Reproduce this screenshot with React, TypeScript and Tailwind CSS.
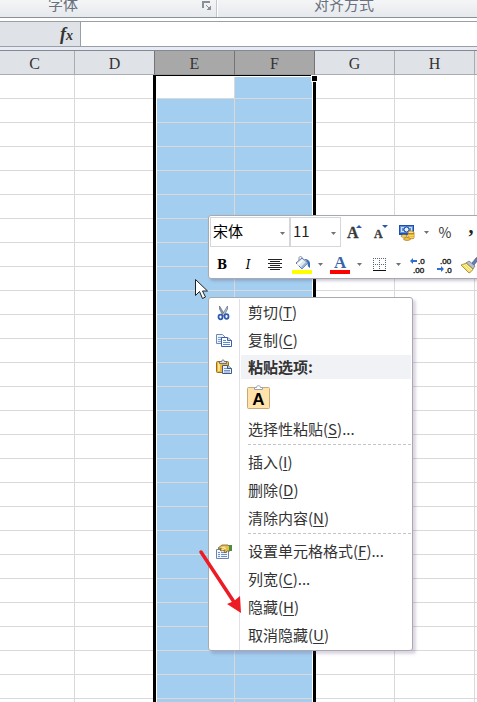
import React from 'react';

const columns = ['C', 'D', 'E', 'F', 'G', 'H', ''];
const rows = Array.from({ length: 27 }, (_, i) => i);
const isSelected = (name: string) => name === 'E' || name === 'F';

function Caret() {
  return (
    <svg width="5" height="3" viewBox="0 0 5 3" aria-hidden="true">
      <path d="M0 0h5L2.5 3z" fill="#6f7378" />
    </svg>
  );
}

function CaretButton({ label }: { label: string }) {
  return (
    <button type="button" aria-label={label} className="flex w-[11px] shrink-0 items-center justify-center">
      <Caret />
    </button>
  );
}

function Tool({ label, width, children }: { label: string; width: string; children: React.ReactNode }) {
  return (
    <button type="button" aria-label={label} className={`flex shrink-0 items-center justify-center ${width}`}>
      {children}
    </button>
  );
}

function GrowFontIcon() {
  return (
    <svg width="16" height="18" viewBox="0 0 16 18">
      <text x="1" y="15" fontSize="16" fontWeight="700" fill="#3b3b3b" stroke="#3b3b3b" strokeWidth=".3" fontFamily="Liberation Serif, serif">A</text>
      <path d="M10 5l3-3 3 3z" fill="#2f57a5" />
    </svg>
  );
}

function ShrinkFontIcon() {
  return (
    <svg width="16" height="18" viewBox="0 0 16 18">
      <text x="2" y="15" fontSize="12" fontWeight="700" fill="#3b3b3b" stroke="#3b3b3b" strokeWidth=".3" fontFamily="Liberation Serif, serif">A</text>
      <path d="M10 2h6l-3 3z" fill="#2f57a5" />
    </svg>
  );
}

function CurrencyIcon() {
  return (
    <svg width="18" height="17" viewBox="0 0 18 17">
      <rect x="1" y="1" width="15" height="10" fill="#1f4fae" />
      <rect x="2" y="2" width="13" height="7" fill="#5b8fe0" />
      <path d="M3 3h3v1H4v3h2v1H3zM14 3h-3v1h2v3h-2v1h3z" fill="#cfe0fa" />
      <circle cx="8.500" cy="5.500" r="2.500" fill="#e6effc" stroke="#1d479b" />
      <ellipse cx="13" cy="8.500" rx="3" ry="1.500" fill="#ffe27a" stroke="#b07a12" strokeWidth=".7" />
      <path d="M10 9v5c0 1 6 1 6 0V9c-1 1-5 1-6 0" fill="#edb52e" stroke="#a46d10" strokeWidth=".7" />
      <path d="M10 11c1 1 5 1 6 0M10 13c1 1 5 1 6 0" stroke="#fff0a8" fill="none" strokeWidth=".7" />
      <ellipse cx="6" cy="12" rx="3" ry="1.300" fill="#ffe27a" stroke="#a46d10" strokeWidth=".7" />
      <ellipse cx="9" cy="15" rx="3.500" ry="1.400" fill="#f8c93f" stroke="#a46d10" strokeWidth=".7" />
    </svg>
  );
}

function CenterIcon() {
  return (
    <svg width="14" height="11" viewBox="0 0 14 11" shapeRendering="crispEdges">
      <path d="M0 .5h14M2 2.500h10M0 4.500h14M2 6.500h10M0 8.500h14M2 10.500h10" stroke="#222" />
    </svg>
  );
}

function FillIcon() {
  return (
    <svg width="20" height="18" viewBox="0 0 20 18">
      <path d="M7 6V2c0-2 3-2 3 0v4" fill="none" stroke="#7d8da3" />
      <path d="M4 7l6-5 6 5-6 6z" fill="#dce8f4" stroke="#637998" />
      <path d="M5 8l5-4 1 1-5 5z" fill="#fff" />
      <path d="M9 11l5-5 2 1-6 6z" fill="#9bb3d0" />
      <path d="M12 3c4 0 6 2 6 5v4c-2-1-3-3-2-5-1-2-2-3-4-4z" fill="#3a69b5" />
      <rect x="0" y="14" width="20" height="4" fill="#ff0" />
    </svg>
  );
}

function FontColorIcon() {
  return (
    <svg width="20" height="18" viewBox="0 0 20 18" className="overflow-visible">
      <text x="4" y="12" fontSize="17" fontWeight="700" fill="#3763aa" fontFamily="Liberation Serif, serif">A</text>
      <rect x="0" y="14" width="20" height="4" fill="#f00" />
    </svg>
  );
}

function BordersIcon() {
  return (
    <svg width="13" height="13" viewBox="0 0 13 13" shapeRendering="crispEdges">
      <path d="M0 .5h13M0 6.500h13M.5 0v12M6.500 0v12M12.500 0v12" stroke="#55657f" strokeDasharray="1 1" fill="none" />
      <path d="M0 12.500h13" stroke="#111" />
    </svg>
  );
}

function DecimalIcon({ increase }: { increase: boolean }) {
  return (
    <svg width="17" height="16" viewBox="0 0 17 16" fontFamily="Liberation Sans, sans-serif" fontSize="8" fill="#222" className="overflow-visible">
      <text x={increase ? 9 : 4} y="7" stroke="#222" strokeWidth=".4">{increase ? '.0' : '.00'}</text>
      <text x={increase ? 4 : 9} y="16" stroke="#222" strokeWidth=".4">{increase ? '.00' : '.0'}</text>
      {increase
        ? <path d="M1 4l3-3v2h4v2H4v2z" fill="#2f6fcf" />
        : <path d="M8 12l-3-3v2H1v2h4v2z" fill="#2f6fcf" />}
    </svg>
  );
}

function BrushIcon() {
  return (
    <svg width="18" height="18" viewBox="0 0 18 18">
      <path d="M11 7l4-5c1-1 3 0 2 2l-4 5z" fill="#6283b5" stroke="#3c547c" strokeWidth=".7" />
      <path d="M8 5l6 5-2 3-7-6z" fill="#b7c0ce" stroke="#5c6779" strokeWidth=".7" />
      <path d="M5 7c-1 1-3 1-5 2l8 8c2-1 3-2 4-4z" fill="#f6de6c" stroke="#9b8220" strokeWidth=".8" />
      <path d="M3 9l6 6M5 8l6 6" stroke="#fff7b8" />
    </svg>
  );
}

function MiniToolbar() {
  return (
    <div
      role="toolbar"
      aria-label="浮动工具栏"
      className="absolute left-[208px] top-[215px] z-10 w-[284px] rounded-[3px] border border-[#a7abb0] bg-white shadow-[2px_2px_3px_rgba(90,80,120,0.3)]"
    >
      <div className="flex h-[31px] pl-px pt-px">
        <label className="relative flex h-[30px] w-[80px] shrink-0 items-center border border-[#d3d6db]">
          <select aria-label="字体" className="h-7 w-full appearance-none bg-transparent pb-0.5 pl-0.5 text-[15px] text-black outline-none">
            <option>宋体</option>
          </select>
          <span className="pointer-events-none absolute right-1 top-[14px]"><Caret /></span>
        </label>
        <label className="relative flex h-[30px] w-[51px] shrink-0 items-center border border-[#d3d6db]">
          <select aria-label="字号" className="h-7 w-full appearance-none bg-transparent pb-0.5 pl-0.5 text-[15px] text-[#222] outline-none">
            <option>11</option>
          </select>
          <span className="pointer-events-none absolute right-1 top-[14px]"><Caret /></span>
        </label>
        <Tool label="增大字体" width="w-[26px]"><GrowFontIcon /></Tool>
        <Tool label="缩小字体" width="w-[26px]"><ShrinkFontIcon /></Tool>
        <Tool label="会计数字格式" width="w-7"><CurrencyIcon /></Tool>
        <CaretButton label="更多会计格式" />
        <Tool label="百分比样式" width="w-[26px]">
          <span className="text-sm text-[#333]">%</span>
        </Tool>
        <Tool label="千位分隔样式" width="w-[26px]">
          <span className="pb-3 font-['Liberation_Serif',serif] text-xl leading-5 font-bold text-[#222]">,</span>
        </Tool>
      </div>
      <div className="flex h-[31px] pt-1">
        <Tool label="加粗" width="w-[26px]">
          <span className="font-['DejaVu_Serif',serif] text-xs font-bold text-black">B</span>
        </Tool>
        <Tool label="倾斜" width="w-[26px]">
          <span className="font-['DejaVu_Serif',serif] text-xs text-black italic">I</span>
        </Tool>
        <Tool label="居中" width="w-[27px]"><CenterIcon /></Tool>
        <Tool label="填充颜色" width="w-[27px]"><FillIcon /></Tool>
        <CaretButton label="更多填充颜色" />
        <Tool label="字体颜色" width="w-7"><FontColorIcon /></Tool>
        <CaretButton label="更多字体颜色" />
        <Tool label="边框" width="w-7"><BordersIcon /></Tool>
        <CaretButton label="更多边框" />
        <Tool label="增加小数位数" width="w-[27px]"><DecimalIcon increase /></Tool>
        <Tool label="减少小数位数" width="w-[26px]"><DecimalIcon increase={false} /></Tool>
        <Tool label="格式刷" width="w-[26px]"><BrushIcon /></Tool>
      </div>
    </div>
  );
}

function CutIcon() {
  return (
    <svg width="16" height="16" viewBox="0 0 16 16">
      <path d="M3.500 1l5.500 9-2 1L3.500 4z" fill="#8b99ad" stroke="#4d5d78" strokeWidth=".6" />
      <path d="M11.500 1L6 10l2 1 3.500-7z" fill="#bcc7d5" stroke="#4d5d78" strokeWidth=".6" />
      <ellipse cx="4.500" cy="12" rx="2" ry="2.300" fill="none" stroke="#2f5cb0" strokeWidth="1.800" />
      <ellipse cx="10.500" cy="11.500" rx="2" ry="2.300" fill="none" stroke="#2f5cb0" strokeWidth="1.800" />
    </svg>
  );
}

function CopyIcon() {
  return (
    <svg width="16" height="16" viewBox="0 0 16 16">
      <path d="M.5 1.500h6l3 3v6h-9z" fill="#eef4fc" stroke="#7188b4" />
      <path d="M2 4.500h4M2 6.500h4M2 8.500h3" stroke="#7aa0dc" />
      <path d="M5.500 4.500h6l4 3v6h-10z" fill="#fff" stroke="#3d5fa5" />
      <path d="M11.500 4.500v3h4" fill="#c9dcf5" stroke="#3d5fa5" />
      <path d="M7 7.500h3M7 9.500h7M7 11.500h7" stroke="#5b8ad4" />
    </svg>
  );
}

function PasteIcon() {
  return (
    <svg width="16" height="16" viewBox="0 0 16 16">
      <rect x=".5" y="2.500" width="12" height="11" rx="1" fill="#edb83d" stroke="#96701e" />
      <path d="M2 4h2v8H2z" fill="#ffe295" />
      <path d="M3.500 4.500v-2h2c0-2 3-2 3 0h2v2z" fill="#d9dce1" stroke="#5e5e5e" strokeWidth=".8" />
      <path d="M6.500 6.500h5l4 3v5h-9z" fill="#e8f1fc" stroke="#465b84" />
      <path d="M8 9.500h4M8 11.500h6M8 13h6" stroke="#7a97c4" />
      <path d="M11.500 6.500v3h4" fill="#b6cbe8" stroke="#465b84" />
    </svg>
  );
}

function FormatIcon() {
  return (
    <svg width="16" height="16" viewBox="0 0 16 16">
      <path d="M.5 5.500h12v9H.5z" fill="#f3f7fd" stroke="#6e84ad" />
      <path d="M2 8.500h2M5 8.500h6M2 10.500h2M5 10.500h6M2 12.500h2M5 12.500h6" stroke="#6a8fcb" />
      <path d="M2 4l4-3 6 0 2 2v4h-3L9 9 8 8l1-2-4 1-1-1 2-2-3 1z" fill="#e7bd52" stroke="#755d20" strokeWidth=".8" />
      <path d="M5 4l4-1M6 6l4-2" stroke="#fff0af" />
      <path d="M13 1h3v6h-3z" fill="#4e8d3c" />
    </svg>
  );
}

function PasteValueIcon() {
  return (
    <svg width="24" height="25" viewBox="0 0 24 25">
      <rect x=".5" y="2.500" width="22" height="21" rx="1" fill="#ffe3ab" stroke="#c8a878" />
      <path d="M7.500 4.500v-2h2c0-2.500 4-2.500 4 0h2v2z" fill="#fff" stroke="#9ba0a6" />
      <text x="11.500" y="20" textAnchor="middle" fontSize="17" fontWeight="700" fontFamily="Liberation Sans, sans-serif" fill="#000">A</text>
    </svg>
  );
}

function Gutter({ children }: { children?: React.ReactNode }) {
  return (
    <span className="flex w-[31px] shrink-0 items-center justify-center self-stretch border-r border-[#e0e1e3]">
      {children}
    </span>
  );
}

function Item({ text, hotkey, more = false, icon }: { text: string; hotkey: string; more?: boolean; icon?: React.ReactNode }) {
  return (
    <li role="none">
      <button type="button" role="menuitem" className="flex h-7 w-full items-center text-left whitespace-nowrap">
        <Gutter>{icon}</Gutter>
        <span className="pb-0.5 pl-2">
          {text}(<span className="underline underline-offset-2">{hotkey}</span>){more ? '...' : ''}
        </span>
      </button>
    </li>
  );
}

function Separator() {
  return (
    <li role="separator" className="flex h-[5px]">
      <Gutter />
      <svg className="ml-2 h-px w-[163px]" shapeRendering="crispEdges" aria-hidden="true">
        <path d="M0 .5h163" stroke="#c3c5c8" strokeDasharray="3 2" />
      </svg>
    </li>
  );
}

function ContextMenu() {
  return (
    <ul
      role="menu"
      className="absolute left-[208px] top-[297px] z-10 w-[205px] rounded-[3px] border border-[#a7abb0] bg-white pt-px text-[15px] leading-5 text-[#333] shadow-[3px_3px_3px_rgba(90,70,120,0.22)]"
    >
      <Item text="剪切" hotkey="T" icon={<CutIcon />} />
      <Item text="复制" hotkey="C" icon={<CopyIcon />} />
      <li role="none" className="flex h-6 items-center pr-px">
        <Gutter><PasteIcon /></Gutter>
        <span className="ml-px flex h-6 flex-1 items-center bg-[#f0f2f5] pl-[7px] font-bold">粘贴选项:</span>
      </li>
      <li role="none" className="flex h-[37px] items-center">
        <Gutter />
        <button type="button" role="menuitem" aria-label="粘贴" className="ml-[7px]"><PasteValueIcon /></button>
      </li>
      <Item text="选择性粘贴" hotkey="S" more />
      <Separator />
      <Item text="插入" hotkey="I" />
      <Item text="删除" hotkey="D" />
      <Item text="清除内容" hotkey="N" />
      <Separator />
      <Item text="设置单元格格式" hotkey="F" more icon={<FormatIcon />} />
      <Item text="列宽" hotkey="C" more />
      <Item text="隐藏" hotkey="H" />
      <Item text="取消隐藏" hotkey="U" />
    </ul>
  );
}

function Ribbon() {
  return (
    <header className="flex h-[18px] border-b border-[#8b9097] bg-linear-to-b from-[#f4f5f6] to-[#e6e9ed] text-[15px] text-[#68717d]">
      <div className="flex w-[217px] shrink-0 items-start border-r border-[#c3c7cd] pl-12">
        <span className="-mt-1 leading-4">字体</span>
        <button type="button" aria-label="字体设置" className="mt-px mr-1 ml-auto">
          <svg width="10" height="10" viewBox="0 0 10 10" shapeRendering="crispEdges">
            <path d="M1 7V1h7" fill="none" stroke="#8a8f96" strokeWidth="2" />
            <path d="M9 4v5H4z" fill="#8a8f96" />
            <path d="M4 4l3 3" stroke="#8a8f96" />
          </svg>
        </button>
      </div>
      <div className="flex-1 border-l border-white pl-24">
        <span className="-mt-1 block leading-4">对齐方式</span>
      </div>
    </header>
  );
}

function FormulaBar() {
  return (
    <div className="border-b border-[#85898f] bg-[#d6dae0]">
      <div className="mt-[3px] flex h-[26px] border-y border-[#9a9fa5] bg-[#dfe2e7]">
        <button type="button" aria-label="插入函数" className="flex w-[81px] shrink-0 items-center justify-end border-r border-[#9a9fa5] pr-[7px] font-['Liberation_Serif',serif] font-bold text-[#333] italic">
          <span className="text-lg leading-5">f</span>
          <span className="pt-1 text-sm leading-4">x</span>
        </button>
        <input aria-label="编辑栏" className="min-w-0 flex-1 bg-white px-1 outline-none" />
      </div>
      <div className="h-[3px] bg-[#e6ebf5]" />
    </div>
  );
}

function Sheet() {
  return (
    <div className="relative">
      <table className="w-full table-fixed border-separate border-spacing-0">
        <colgroup>
          <col className="w-[75px]" />
          <col className="w-20" />
          <col className="w-20" />
          <col className="w-20" />
          <col className="w-20" />
          <col className="w-20" />
          <col />
        </colgroup>
        <thead>
          <tr>
            {columns.map((name) => (
              <th
                key={name}
                scope="col"
                className={`h-6 border-b pt-0.5 pb-0 pl-0 text-center font-['Liberation_Serif',serif] text-base leading-5 font-normal text-[#333] ${
                  isSelected(name) ? 'border-r-[#747474] border-b-[#9a9a9a] bg-[#a8a8a8]' : 'border-[#a9adb3] bg-[#dfe2e7]'
                } ${name === 'D' ? 'border-r-[#747474]' : ''} ${name === 'C' ? 'pr-[5px]' : 'pr-0'} ${name ? 'border-r' : ''}`}
              >
                {name}
              </th>
            ))}
          </tr>
        </thead>
        <tbody>
          {rows.map((row) => (
            <tr key={row}>
              {columns.map((name) => (
                <td
                  key={name}
                  className={`h-6 border-b border-[#d9d9d9] p-0 ${name ? 'border-r' : ''} ${
                    isSelected(name) && !(row === 0 && name === 'E') ? 'bg-[#a4cef0] bg-clip-padding' : 'bg-white'
                  }`}
                />
              ))}
            </tr>
          ))}
        </tbody>
      </table>
      <div className="pointer-events-none absolute top-6 bottom-0 left-[153px] w-[163px] border-x-[3px] border-t border-black">
        <div className="h-full border-x border-t border-white" />
        <span className="absolute -top-px -right-[5px] size-[7px] border border-white bg-black" />
      </div>
    </div>
  );
}

export default function App() {
  return (
    <main className="relative h-screen overflow-hidden bg-white font-['Noto_Sans_CJK_SC',sans-serif]">
      <Ribbon />
      <FormulaBar />
      <Sheet />
      <MiniToolbar />
      <ContextMenu />
      <svg className="pointer-events-none absolute left-[194px] top-[278px] z-20" width="15" height="23" viewBox="0 0 15 23" aria-hidden="true">
        <path d="M1.500 1.500v16l4-4 3 7 3-1.500-3-6h5z" fill="#fff" stroke="#222" />
      </svg>
      <svg className="pointer-events-none absolute left-[198px] top-[548px] z-20" width="46" height="68" viewBox="0 0 46 68" aria-hidden="true">
        <path d="M3 4l33 50" stroke="#ed1c24" strokeWidth="3.500" strokeLinecap="round" />
        <path d="M43 65L29 56l7-3 6-5z" fill="#ed1c24" />
      </svg>
    </main>
  );
}
